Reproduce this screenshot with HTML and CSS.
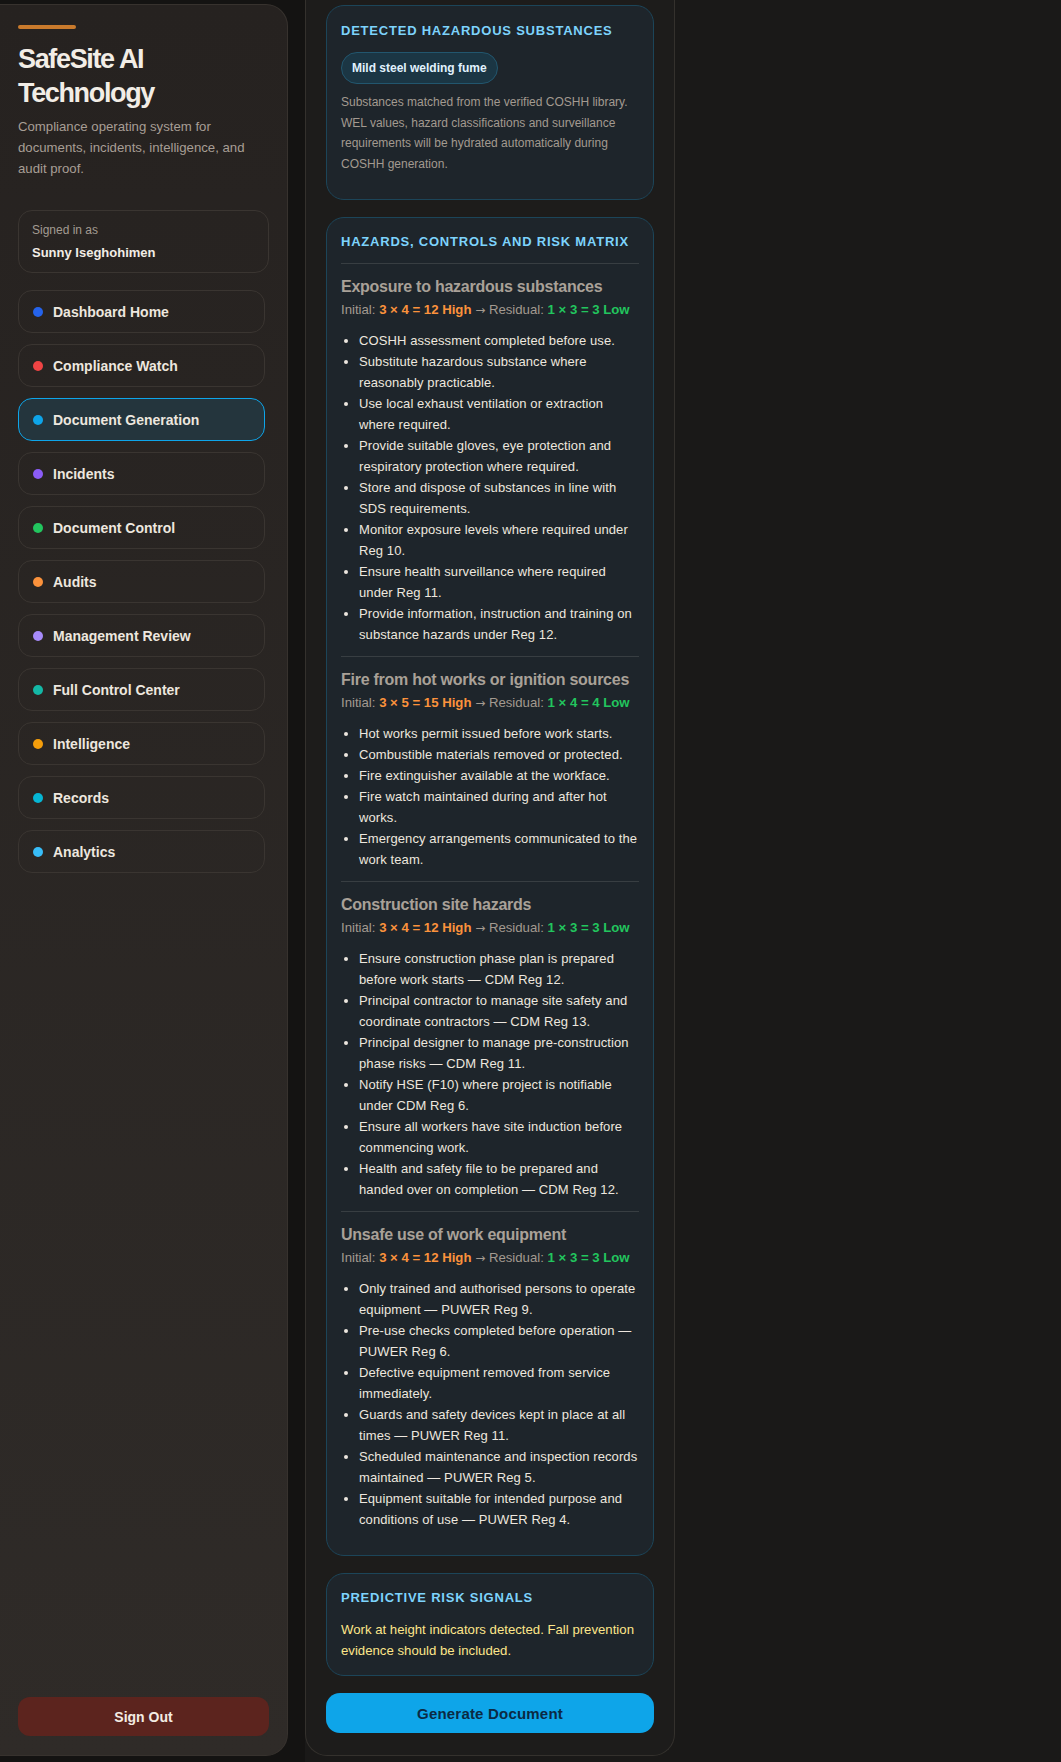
FILE: index.html
```html
<!DOCTYPE html>
<html lang="en">
<head>
    <meta charset="UTF-8">
    <meta name="viewport" content="width=device-width, initial-scale=1.0">
    <title>SafeSite AI Technology - Document Generation</title>
    <link rel="stylesheet" href="styles.css">
</head>
<body>
    <div class="app">
        <div class="rail">
            <aside class="sidebar">
                <div class="brand-bar"></div>
                <h1 class="brand">SafeSite AI Technology</h1>
                <p class="tagline">Compliance operating system for documents, incidents, intelligence, and audit proof.</p>

                <div class="signed-in">
                    <div class="signed-label">Signed in as</div>
                    <div class="signed-name">Sunny Iseghohimen</div>
                </div>

                <nav class="nav">
                    <a class="nav-item"><span class="dot dot-blue"></span>Dashboard Home</a>
                    <a class="nav-item"><span class="dot dot-red"></span>Compliance Watch</a>
                    <a class="nav-item active"><span class="dot dot-sky"></span>Document Generation</a>
                    <a class="nav-item"><span class="dot dot-violet"></span>Incidents</a>
                    <a class="nav-item"><span class="dot dot-green"></span>Document Control</a>
                    <a class="nav-item"><span class="dot dot-orange"></span>Audits</a>
                    <a class="nav-item"><span class="dot dot-lilac"></span>Management Review</a>
                    <a class="nav-item"><span class="dot dot-teal"></span>Full Control Center</a>
                    <a class="nav-item"><span class="dot dot-amber"></span>Intelligence</a>
                    <a class="nav-item"><span class="dot dot-cyan"></span>Records</a>
                    <a class="nav-item"><span class="dot dot-light"></span>Analytics</a>
                </nav>

                <button class="sign-out">Sign Out</button>
            </aside>
        </div>

        <main class="panel">
            <section class="card">
                <h2 class="card-title">Detected Hazardous Substances</h2>
                <span class="chip">Mild steel welding fume</span>
                <p class="card-note">Substances matched from the verified COSHH library. WEL values, hazard classifications and surveillance requirements will be hydrated automatically during COSHH generation.</p>
            </section>

            <section class="card">
                <h2 class="card-title">Hazards, Controls and Risk Matrix</h2>

                <div class="hazard">
                    <h3>Exposure to hazardous substances</h3>
                    <div class="rating">Initial: <b class="high">3 × 4 = 12 High</b> <span class="arrow">→</span> Residual: <b class="low">1 × 3 = 3 Low</b></div>
                    <ul>
                        <li>COSHH assessment completed before use.</li>
                        <li>Substitute hazardous substance where reasonably practicable.</li>
                        <li>Use local exhaust ventilation or extraction where required.</li>
                        <li>Provide suitable gloves, eye protection and respiratory protection where required.</li>
                        <li>Store and dispose of substances in line with SDS requirements.</li>
                        <li>Monitor exposure levels where required under Reg 10.</li>
                        <li>Ensure health surveillance where required under Reg 11.</li>
                        <li>Provide information, instruction and training on substance hazards under Reg 12.</li>
                    </ul>
                </div>

                <div class="hazard">
                    <h3>Fire from hot works or ignition sources</h3>
                    <div class="rating">Initial: <b class="high">3 × 5 = 15 High</b> <span class="arrow">→</span> Residual: <b class="low">1 × 4 = 4 Low</b></div>
                    <ul>
                        <li>Hot works permit issued before work starts.</li>
                        <li>Combustible materials removed or protected.</li>
                        <li>Fire extinguisher available at the workface.</li>
                        <li>Fire watch maintained during and after hot works.</li>
                        <li>Emergency arrangements communicated to the work team.</li>
                    </ul>
                </div>

                <div class="hazard">
                    <h3>Construction site hazards</h3>
                    <div class="rating">Initial: <b class="high">3 × 4 = 12 High</b> <span class="arrow">→</span> Residual: <b class="low">1 × 3 = 3 Low</b></div>
                    <ul>
                        <li>Ensure construction phase plan is prepared before work starts — CDM Reg 12.</li>
                        <li>Principal contractor to manage site safety and coordinate contractors — CDM Reg 13.</li>
                        <li>Principal designer to manage pre-construction phase risks — CDM Reg 11.</li>
                        <li>Notify HSE (F10) where project is notifiable under CDM Reg 6.</li>
                        <li>Ensure all workers have site induction before commencing work.</li>
                        <li>Health and safety file to be prepared and handed over on completion — CDM Reg 12.</li>
                    </ul>
                </div>

                <div class="hazard">
                    <h3>Unsafe use of work equipment</h3>
                    <div class="rating">Initial: <b class="high">3 × 4 = 12 High</b> <span class="arrow">→</span> Residual: <b class="low">1 × 3 = 3 Low</b></div>
                    <ul>
                        <li>Only trained and authorised persons to operate equipment — PUWER Reg 9.</li>
                        <li>Pre-use checks completed before operation — PUWER Reg 6.</li>
                        <li>Defective equipment removed from service immediately.</li>
                        <li>Guards and safety devices kept in place at all times — PUWER Reg 11.</li>
                        <li>Scheduled maintenance and inspection records maintained — PUWER Reg 5.</li>
                        <li>Equipment suitable for intended purpose and conditions of use — PUWER Reg 4.</li>
                    </ul>
                </div>
            </section>

            <section class="card">
                <h2 class="card-title">Predictive Risk Signals</h2>
                <p class="signal">Work at height indicators detected. Fall prevention evidence should be included.</p>
            </section>

            <button class="generate">Generate Document</button>
        </main>
    </div>
</body>
</html>
```

FILE: styles.css
```css
html {
    overflow-y: scroll;
}
::-webkit-scrollbar {
    width: 14px;
}
::-webkit-scrollbar-track {
    background: #2d2d2d;
}
::-webkit-scrollbar-thumb {
    background: #a3a3a3;
    border-radius: 6px;
    border: 3px solid #2d2d2d;
}
body {
    margin: 0;
    background-color: #1a1918;
    color: #ede7df;
    font-family: 'Liberation Sans', Arial, sans-serif;
}
.app {
    display: flex;
    align-items: flex-start;
}
.rail {
    background: #141312;
    padding: 4px 17px 6px 0;
}
.sidebar {
    box-sizing: border-box;
    width: 288px;
    height: calc(100vh - 10px);
    display: flex;
    flex-direction: column;
    padding: 20px 18px 19px 18px;
    background: linear-gradient(180deg, #262220 0%, #2f2b28 100%);
    border: 1px solid #37322e;
    border-left: none;
    border-radius: 0 22px 22px 0;
}
.brand-bar {
    width: 58px;
    height: 4px;
    border-radius: 2px;
    background: #c97a2c;
}
.brand {
    margin: 13px 0 0;
    font-size: 27px;
    line-height: 34px;
    letter-spacing: -0.05em;
    color: #f2ede6;
}
.tagline {
    margin: 6px 0 0;
    font-size: 13.2px;
    line-height: 21px;
    color: #a79e95;
}
.signed-in {
    margin-top: 31px;
    padding: 10px 13px;
    border: 1px solid #3a3531;
    border-radius: 14px;
}
.signed-label {
    font-size: 12px;
    line-height: 18px;
    color: #a39b92;
}
.signed-name {
    margin-top: 5px;
    font-size: 13px;
    line-height: 18px;
    font-weight: bold;
    color: #f2ede6;
}
.nav {
    margin-top: 17px;
    margin-right: 4px;
    display: flex;
    flex-direction: column;
    gap: 11px;
}
.nav-item {
    display: flex;
    align-items: center;
    gap: 10px;
    height: 43px;
    box-sizing: border-box;
    padding: 0 14px;
    border: 1px solid #3a3531;
    border-radius: 14px;
    font-size: 14px;
    font-weight: bold;
    color: #ede7df;
}
.nav-item.active {
    background: #24353d;
    border-color: #0ea5e9;
}
.dot {
    width: 10px;
    height: 10px;
    border-radius: 50%;
    flex: none;
}
.dot-blue { background: #2563eb; }
.dot-red { background: #ef4444; }
.dot-sky { background: #0ea5e9; }
.dot-violet { background: #8b5cf6; }
.dot-green { background: #22c55e; }
.dot-orange { background: #fb923c; }
.dot-lilac { background: #a78bfa; }
.dot-teal { background: #14b8a6; }
.dot-amber { background: #f59e0b; }
.dot-cyan { background: #06b6d4; }
.dot-light { background: #38bdf8; }
.sign-out {
    margin-top: auto;
    height: 39px;
    border: none;
    border-radius: 12px;
    background: #5c241e;
    color: #f4ece4;
    font-family: inherit;
    font-size: 14px;
    font-weight: bold;
}
.panel {
    box-sizing: border-box;
    width: 370px;
    display: flex;
    flex-direction: column;
    gap: 17px;
    padding: 5px 20px 22px;
    background: #1d1c1b;
    border: 1px solid #34312d;
    border-top: none;
    border-radius: 0 0 22px 22px;
}
.card {
    padding: 15px 14px 14px;
    background: #1e252b;
    border: 1px solid #1c4559;
    border-radius: 18px;
}
.card:first-child {
    padding-top: 16px;
}
.card-title {
    margin: 0 0 12px;
    font-size: 13px;
    line-height: 18px;
    letter-spacing: 0.06em;
    text-transform: uppercase;
    color: #7dd3fc;
}
.chip {
    display: inline-block;
    padding: 0 10px;
    line-height: 30px;
    border: 1px solid #22566e;
    border-radius: 999px;
    background: #1b3644;
    font-size: 12px;
    font-weight: bold;
    color: #e0f2fe;
}
.card-note {
    margin: 8px 0 11px;
    font-size: 12px;
    line-height: 20.5px;
    color: #a39a90;
}
.hazard {
    border-top: 1px solid #383e42;
    padding-top: 11px;
}
.hazard h3 {
    margin: 0;
    font-size: 16px;
    line-height: 24px;
    letter-spacing: -0.25px;
    color: #a9a198;
}
.rating {
    font-size: 13.2px;
    line-height: 22px;
    color: #a39a90;
}
.rating .high {
    color: #fb923c;
}
.rating .low {
    color: #22c55e;
}
.rating .arrow {
    font-family: 'DejaVu Sans', sans-serif;
    font-size: 12px;
}
.hazard ul {
    margin: 9px 0 11px;
    padding-left: 18px;
}
.hazard li {
    font-size: 13px;
    letter-spacing: 0.1px;
    line-height: 21px;
    color: #ede7df;
}
.signal {
    margin: 0;
    font-size: 13.2px;
    line-height: 21px;
    color: #fde68a;
}
.generate {
    height: 40px;
    border: none;
    border-radius: 14px;
    background: #0ea5e9;
    color: #0b2a44;
    font-family: inherit;
    font-size: 15px;
    font-weight: bold;
    letter-spacing: 0.2px;
}
```
